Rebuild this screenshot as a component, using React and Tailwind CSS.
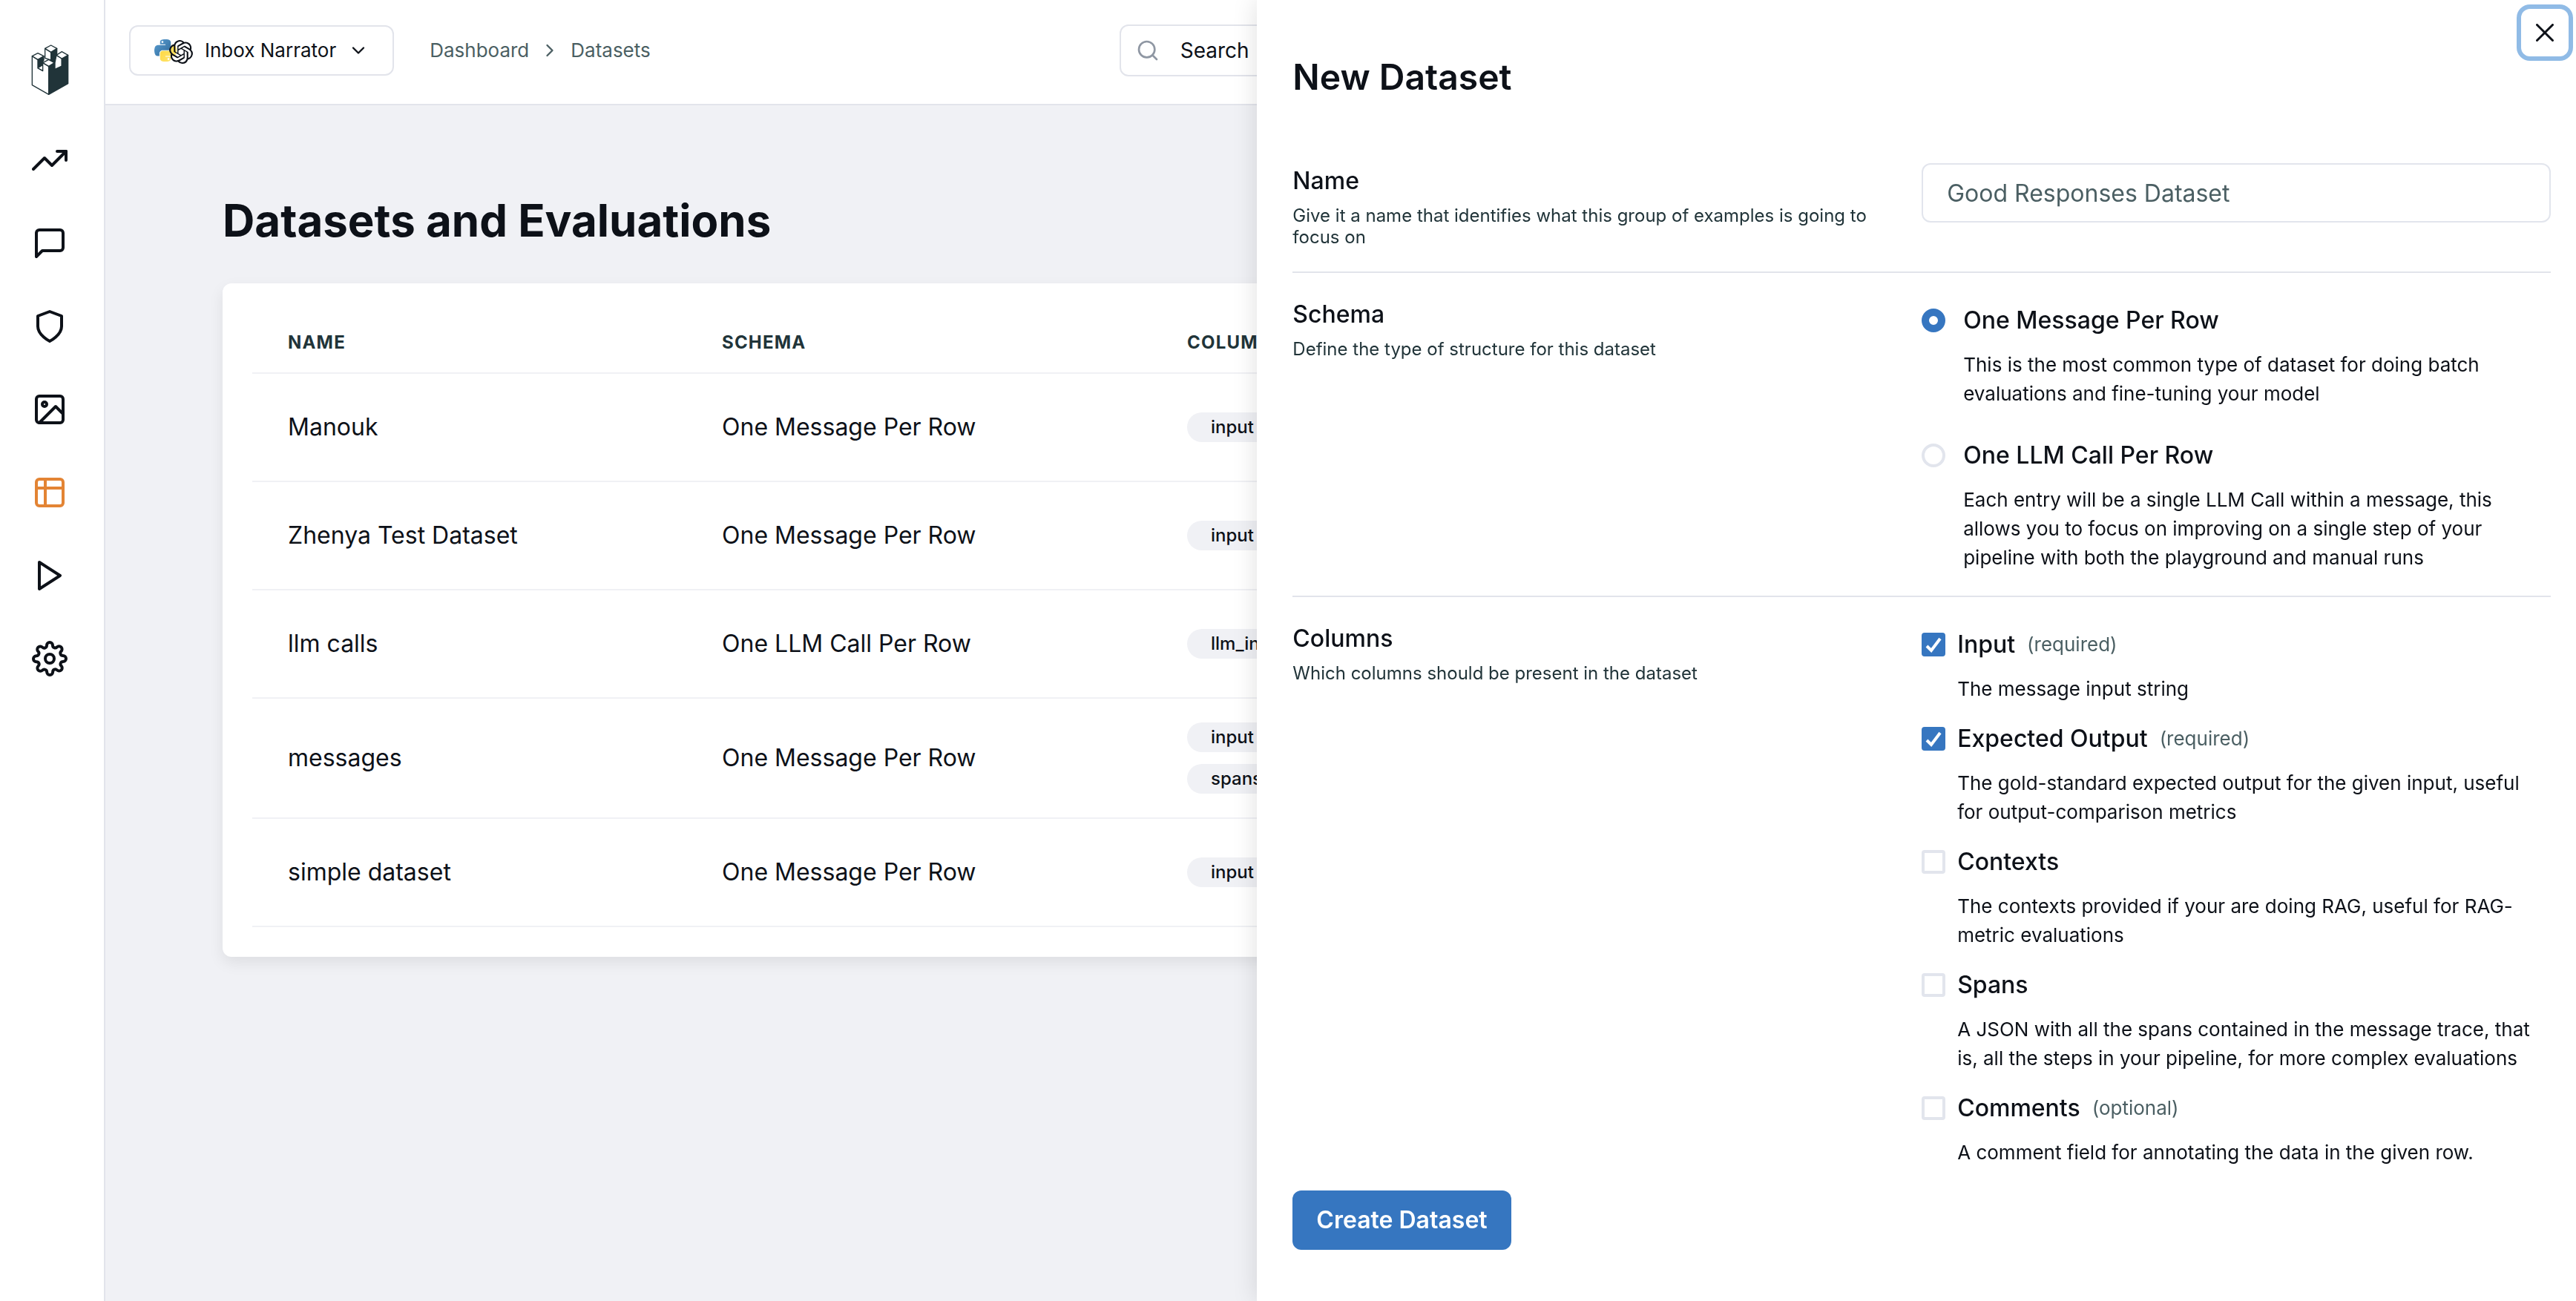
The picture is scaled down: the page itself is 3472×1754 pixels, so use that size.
import { FiTrendingUp, FiMessageSquare, FiShield, FiImage, FiPlay, FiSettings, FiChevronDown, FiChevronRight, FiSearch } from "react-icons/fi";
import { SiOpenai } from "react-icons/si";

function Logo() {
  return (
    <svg viewBox="26 29 150 204" className="h-[68px] w-[50px] overflow-visible" aria-hidden="true">
      <g fill="#fff" stroke="#213439" strokeWidth="4" strokeLinejoin="round">
        <path d="M79 45 103 60V92L79 84Z" />
        <path d="M103 60 127 45V76L117 103 103 94Z" fill="#213439" />
        <path d="M50 90 74 76V92L68 103V135L50 125Z" fill="#213439" />
        <path d="M53 124 68 115V132Z" stroke="none" />
        <path d="M125 72 147 86V118L119 131V103Z" />
        <path d="M27 76 50 90V125L70 136V103L94 117V231L27 193Z" />
        <path d="M94 117 117 103V130L147 116V86L172 72V187L94 231Z" fill="#213439" />
        <path d="M27 76 50 64 74 76 50 90Z" />
        <path d="M79 45 103 32 127 45 103 60Z" />
        <path d="M125 72 147 58 172 72 147 86Z" />
        <path d="M70 103 94 90 117 103 94 117Z" />
      </g>
    </svg>
  );
}

function TableIcon() {
  return (
    <svg viewBox="0 0 24 24" width="48" height="48" fill="none" stroke="currentColor" strokeWidth="2" strokeLinecap="round" strokeLinejoin="round" aria-hidden="true">
      <path d="M9 3H5a2 2 0 0 0-2 2v4m6-6h10a2 2 0 0 1 2 2v4M9 3v18m0 0h10a2 2 0 0 0 2-2V9M9 21H5a2 2 0 0 1-2-2V9m0 0h18" />
    </svg>
  );
}

function PythonIcon() {
  return (
    <svg viewBox="0 0 111 111" className="size-[30px]" aria-hidden="true">
      <defs>
        <linearGradient id="pyBlue" x1="0" y1="0" x2="1" y2="1">
          <stop offset="0" stopColor="#5a9fd4" />
          <stop offset="1" stopColor="#306998" />
        </linearGradient>
        <linearGradient id="pyYellow" x1="1" y1="1" x2="0" y2="0">
          <stop offset="0" stopColor="#ffe873" />
          <stop offset="1" stopColor="#ffd43b" />
        </linearGradient>
      </defs>
      <path fill="url(#pyBlue)" d="M54.92 0C50.34.02 45.96.41 42.11 1.09 30.76 3.1 28.7 7.29 28.7 15.03v10.22h26.81v3.41H18.64c-7.79 0-14.62 4.68-16.75 13.59-2.46 10.21-2.57 16.59 0 27.25 1.9 7.94 6.46 13.6 14.25 13.6h9.22V70.84c0-8.85 7.65-16.65 16.75-16.65h26.78c7.45 0 13.4-6.14 13.4-13.63V15.03c0-7.27-6.13-12.72-13.4-13.94C64.28.33 59.5-.02 54.92 0Zm-14.5 8.22c2.77 0 5.03 2.3 5.03 5.12 0 2.82-2.26 5.1-5.03 5.1-2.78 0-5.03-2.28-5.03-5.1 0-2.82 2.25-5.12 5.03-5.12Z" />
      <path fill="url(#pyYellow)" d="M85.64 28.66v11.9c0 9.23-7.83 17-16.75 17H42.11c-7.34 0-13.41 6.28-13.41 13.63v25.53c0 7.26 6.32 11.54 13.41 13.62 8.48 2.5 16.62 2.95 26.78 0 6.75-1.95 13.4-5.89 13.4-13.62V86.5H55.51v-3.41h40.19c7.79 0 10.69-5.43 13.4-13.59 2.8-8.4 2.68-16.48 0-27.25-1.92-7.76-5.6-13.59-13.4-13.59ZM70.58 93.31c2.77 0 5.03 2.28 5.03 5.1 0 2.82-2.25 5.12-5.03 5.12-2.77 0-5.04-2.3-5.04-5.12 0-2.82 2.27-5.1 5.04-5.1Z" />
    </svg>
  );
}

const NAV = [
  { label: "Analytics", icon: <FiTrendingUp size={48} /> },
  { label: "Messages", icon: <FiMessageSquare size={48} /> },
  { label: "Guardrails", icon: <FiShield size={48} /> },
  { label: "Images", icon: <FiImage size={48} /> },
  { label: "Datasets", icon: <TableIcon />, active: true },
  { label: "Playground", icon: <FiPlay size={48} /> },
  { label: "Settings", icon: <FiSettings size={48} /> },
];

function Sidebar() {
  return (
    <nav className="flex w-[142px] shrink-0 flex-col gap-16 border-r-2 border-[#e2e4eb] bg-white pt-[60px] pl-[43px]">
      <a href="#home" aria-label="Home">
        <Logo />
      </a>
      {NAV.map((item) => (
        <a key={item.label} href={"#" + item.label.toLowerCase()} aria-label={item.label} className={item.active ? "text-[#e38434]" : ""}>
          {item.icon}
        </a>
      ))}
    </nav>
  );
}

function Header() {
  return (
    <header className="flex h-[142px] items-start border-b-2 border-[#e2e4eb] bg-white pl-8 text-[26px] leading-[40px]">
      <button type="button" className="mt-[34px] flex h-[68px] items-center rounded-xl border-2 border-[#e2e4eb] px-8">
        <span className="flex items-center">
          <PythonIcon />
          <SiOpenai size={32} className="-ml-2.5 mt-1" />
        </span>
        <span className="ml-4">Inbox Narrator</span>
        <FiChevronDown size={28} className="ml-4" />
      </button>
      <nav aria-label="Breadcrumb" className="ml-12 mt-12 flex items-center text-[#4b5f63]">
        <a href="#dashboard">Dashboard</a>
        <FiChevronRight size={28} className="mx-3.5" />
        <a href="#datasets">Datasets</a>
      </nav>
      <label className="mt-[33px] ml-[632px] flex h-[70px] flex-1 items-center gap-7 rounded-xl border-2 border-[#e2e4eb] px-5 text-[28px]">
        <FiSearch size={32} className="shrink-0 text-[#8f97a3]" />
        <input type="search" aria-label="Search" placeholder="Search" className="w-full outline-none placeholder:text-[#0d1118]" />
      </label>
    </header>
  );
}

const ROWS = [
  { name: "Manouk", schema: "One Message Per Row", tags: [["input"]] },
  { name: "Zhenya Test Dataset", schema: "One Message Per Row", tags: [["input"]] },
  { name: "llm calls", schema: "One LLM Call Per Row", tags: [["llm_input"]] },
  { name: "messages", schema: "One Message Per Row", tags: [["input"], ["spans"]] },
  { name: "simple dataset", schema: "One Message Per Row", tags: [["input"]] },
];

function DatasetsTable() {
  return (
    <div className="rounded-xl bg-white p-10 shadow-[0_8px_20px_rgba(0,0,0,0.08)]">
      <table className="w-full table-fixed border-separate border-spacing-0 text-left">
        <colgroup>
          <col className="w-[585px]" />
          <col className="w-[627px]" />
          <col />
        </colgroup>
        <thead>
          <tr className="text-2xl font-bold tracking-wider text-[#213439] uppercase">
            {["Name", "Schema", "Columns"].map((head) => (
              <th key={head} scope="col" className="border-b-2 border-[#f0f1f5] px-12 py-6 font-bold">
                {head}
              </th>
            ))}
          </tr>
        </thead>
        <tbody>
          {ROWS.map((row) => (
            <tr key={row.name} className="h-[146px] text-[32px] leading-[48px]">
              <td className="border-b-2 border-[#f0f1f5] px-12">{row.name}</td>
              <td className="border-b-2 border-[#f0f1f5] px-12">{row.schema}</td>
              <td className="border-b-2 border-[#f0f1f5] px-12 py-8">
                <div className="flex flex-col items-start gap-4">
                  {row.tags.map((line) => (
                    <div key={line[0]} className="flex gap-4">
                      {line.map((tag) => (
                        <span key={tag} className="rounded-full bg-[#f0f1f5] px-8 text-2xl leading-[40px] font-medium">
                          {tag}
                        </span>
                      ))}
                    </div>
                  ))}
                </div>
              </td>
            </tr>
          ))}
        </tbody>
      </table>
    </div>
  );
}

function Section({ title, help, htmlFor, children }) {
  const Title = htmlFor ? "label" : "h3";
  return (
    <section className="grid grid-cols-2 border-b-2 border-[#e2e4eb] py-8 last-of-type:border-b-0">
      <div className="pr-8">
        <Title htmlFor={htmlFor} className="block text-[32px] leading-[48px] font-medium">
          {title}
        </Title>
        <p className="mt-2 text-2xl leading-[29px] text-[#213439]">{help}</p>
      </div>
      <div>{children}</div>
    </section>
  );
}

const SCHEMAS = [
  { id: "message", title: "One Message Per Row", text: "This is the most common type of dataset for doing batch evaluations and fine-tuning your model", checked: true },
  { id: "llm", title: "One LLM Call Per Row", text: "Each entry will be a single LLM Call within a message, this allows you to focus on improving on a single step of your pipeline with both the playground and manual runs" },
];

const COLUMNS = [
  { id: "input", title: "Input", note: "(required)", text: "The message input string", checked: true },
  { id: "output", title: "Expected Output", note: "(required)", text: "The gold-standard expected output for the given input, useful for output-comparison metrics", checked: true },
  { id: "contexts", title: "Contexts", text: "The contexts provided if your are doing RAG, useful for RAG-metric evaluations" },
  { id: "spans", title: "Spans", text: "A JSON with all the spans contained in the message trace, that is, all the steps in your pipeline, for more complex evaluations" },
  { id: "comments", title: "Comments", note: "(optional)", text: "A comment field for annotating the data in the given row." },
];

function SchemaOption({ option }) {
  return (
    <div>
      <label className="flex items-center gap-6 text-[32px] leading-[48px] font-medium">
        <input
          type="radio"
          name="schema"
          defaultChecked={option.checked}
          className="size-8 shrink-0 appearance-none rounded-full border-4 border-[#e2e5ed] bg-white checked:border-10 checked:border-[#3676c0]"
        />
        {option.title}
      </label>
      <p className="mt-4 pr-6 pl-14 text-[26px] leading-[39px]">{option.text}</p>
    </div>
  );
}

function ColumnOption({ option }) {
  return (
    <div>
      <label className="flex items-center gap-4 text-[32px] leading-[48px] font-medium">
        <span className="grid shrink-0 place-items-center">
          <input
            type="checkbox"
            defaultChecked={option.checked}
            className="peer col-start-1 row-start-1 size-8 appearance-none rounded-sm border-4 border-[#e2e5ed] bg-white checked:border-[#3676c0] checked:bg-[#3676c0]"
          />
          <svg viewBox="0 0 12 10" className="pointer-events-none invisible col-start-1 row-start-1 h-5 w-6 overflow-visible peer-checked:visible" fill="none" stroke="#fff" strokeWidth="2" aria-hidden="true">
            <polyline points="1.5 6 4.5 9 10.5 1" />
          </svg>
        </span>
        {option.title}
        {option.note && <span className="text-[26px] font-normal text-[#4b5f63]">{option.note}</span>}
      </label>
      <p className="mt-4 pr-4 pl-12 text-[26px] leading-[39px]">{option.text}</p>
    </div>
  );
}

function Drawer() {
  return (
    <aside role="dialog" aria-labelledby="drawer-title" className="fixed inset-y-0 right-0 w-[51.2%] overflow-hidden bg-white pt-[72px] pr-[34px] pl-12 shadow-[0_0_32px_rgba(0,0,0,0.13)]">
      <button type="button" aria-label="Close" className="absolute top-3 right-2.5 grid size-16 place-items-center rounded-xl ring-6 ring-[#90bbe6]">
        <svg viewBox="0 0 24 24" className="size-6" fill="currentColor" aria-hidden="true">
          <path d="M.439,21.44a1.5,1.5,0,0,0,2.122,2.121L11.823,14.3a.25.25,0,0,1,.354,0l9.262,9.263a1.5,1.5,0,1,0,2.122-2.121L14.3,12.177a.25.25,0,0,1,0-.354l9.263-9.262A1.5,1.5,0,0,0,21.439.44L12.177,9.7a.25.25,0,0,1-.354,0L2.561.44A1.5,1.5,0,0,0,.439,2.561L9.7,11.823a.25.25,0,0,1,0,.354Z" />
        </svg>
      </button>
      <h2 id="drawer-title" className="mb-[52px] text-5xl leading-[64px] font-semibold">
        New Dataset
      </h2>
      <form>
        <Section title="Name" help="Give it a name that identifies what this group of examples is going to focus on" htmlFor="dataset-name">
          <input id="dataset-name" type="text" placeholder="Good Responses Dataset" className="h-20 w-full rounded-xl border-2 border-[#e2e5ed] px-8 text-[32px] placeholder:text-[#4b5f63]" />
        </Section>
        <Section title="Schema" help="Define the type of structure for this dataset">
          <div className="flex flex-col gap-10 pt-2">
            {SCHEMAS.map((option) => (
              <SchemaOption key={option.id} option={option} />
            ))}
          </div>
        </Section>
        <Section title="Columns" help="Which columns should be present in the dataset">
          <div className="flex flex-col gap-6 pt-2">
            {COLUMNS.map((option) => (
              <ColumnOption key={option.id} option={option} />
            ))}
          </div>
        </Section>
        <button type="submit" className="h-20 rounded-xl bg-[#3676c0] px-8 text-[32px] font-semibold text-white">
          Create Dataset
        </button>
      </form>
    </aside>
  );
}

export default function App() {
  return (
    <div className="flex min-h-screen overflow-x-hidden bg-[#f0f1f5] font-['Inter',sans-serif] text-[#0d1118]">
      <Sidebar />
      <div className="min-w-0 flex-1">
        <Header />
        <main className="px-[158px] pt-[118px]">
          <h1 className="mb-12 text-6xl leading-[74px] font-bold">Datasets and Evaluations</h1>
          <DatasetsTable />
        </main>
      </div>
      <Drawer />
    </div>
  );
}
